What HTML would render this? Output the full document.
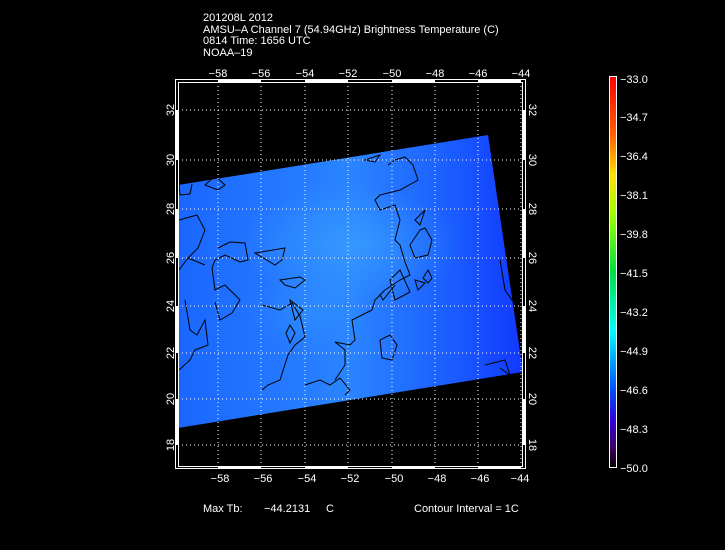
<!DOCTYPE html>
<html><head><meta charset="utf-8"><style>
html,body{margin:0;padding:0;background:#000;}
body{width:725px;height:550px;overflow:hidden;position:relative;font-family:"Liberation Sans",sans-serif;}
svg{position:absolute;left:0;top:0;}
text{font-family:"Liberation Sans",sans-serif;font-size:11px;fill:#fff;}
</style></head><body>
<svg width="725" height="550" viewBox="0 0 725 550">
<defs>
<linearGradient id="sw" x1="0" y1="0" x2="1" y2="0">
<stop offset="0" stop-color="#1a66ff"/><stop offset="0.5" stop-color="#2a85ff"/><stop offset="0.8" stop-color="#1a5cff"/><stop offset="1" stop-color="#1238ff"/>
</linearGradient>
<radialGradient id="hl" cx="0.5" cy="0.5" r="0.5">
<stop offset="0" stop-color="#3aa0ff" stop-opacity="0.7"/><stop offset="1" stop-color="#3aa0ff" stop-opacity="0"/>
</radialGradient>
<linearGradient id="cb" x1="0" y1="0" x2="0" y2="1">
<stop offset="0" stop-color="#ff0000"/><stop offset="0.15" stop-color="#ff6000"/><stop offset="0.25" stop-color="#ffe000"/><stop offset="0.35" stop-color="#a0ff00"/><stop offset="0.5" stop-color="#00e040"/><stop offset="0.65" stop-color="#00ffff"/><stop offset="0.8" stop-color="#0050ff"/><stop offset="0.88" stop-color="#3000e0"/><stop offset="0.95" stop-color="#400060"/><stop offset="1" stop-color="#000000"/>
</linearGradient>
</defs>
<text x="203" y="21">201208L 2012</text>
<text x="203" y="33">AMSU–A Channel 7 (54.94GHz) Brightness Temperature (C)</text>
<text x="203" y="44">0814 Time: 1656 UTC</text>
<text x="203" y="56">NOAA–19</text>

<polygon points="178,185 488,135 523,372 178,428" fill="url(#sw)"/>
<ellipse cx="350" cy="245" rx="110" ry="60" fill="url(#hl)"/>
<ellipse cx="310" cy="310" rx="60" ry="40" fill="url(#hl)" opacity="0.5"/>

<g fill="none" stroke="#000" stroke-width="1">
<path d="M179,184 L180,195 L190,194 L192,184"/>
<path d="M215,176 L225,185 L218,190 L205,185 Z"/>
<path d="M179,220 L197,215 L205,230 L198,248 L188,258 L179,270 M188,258 L205,265"/>
<path d="M255,253 L285,248 L282,260 L275,265 Z"/>
<path d="M218,248 L230,242 L245,243 L248,260 L240,262 L225,255 L215,260 L212,268 L215,290 L225,285 L240,300 L232,313 L220,320 L215,302"/>
<path d="M280,280 L300,277 L305,280 L295,288 L285,285 Z"/>
<path d="M185,300 L190,330 L197,335 L205,320 L208,345 L195,350 L190,360 L179,370"/>
<path d="M262,305 L280,310 L292,303 L300,316 L305,337 L295,345 L288,355 L280,380 L268,385 L262,390"/>
<path d="M290,300 L303,310 L295,320 Z"/>
<path d="M290,325 L295,333 L290,343 L286,333 Z"/>
<path d="M388,165 L395,160 L405,157 L413,165 L418,180 L400,190 L380,195 L375,200 L380,210 L395,205 L400,220 L395,240 L400,245 L405,262 L410,275 L400,280 L385,290 L375,300 L372,310 L352,320 L355,340 L350,345 L335,342 L345,350 L345,365 L335,380"/>
<path d="M390,280 L400,270 L410,292 L395,300 Z"/>
<path d="M395,285 L383,300 L380,295"/>
<path d="M420,230 L425,228 L432,240 L428,255 L415,258 L410,245 Z"/>
<path d="M415,220 L425,210 L420,225 Z"/>
<path d="M415,280 L425,283 L418,290 Z"/>
<path d="M380,340 L390,335 L397,345 L392,360 L382,358 Z"/>
<path d="M365,160 L380,155 L375,162 Z"/>
<path d="M305,385 L320,380 L330,385 L340,378 L350,390 L345,395"/>
<path d="M428,270 L432,278 L428,283 L423,278 Z"/>
<path d="M485,365 L505,360 L510,375 L500,368"/>
<path d="M515,226 L520,240"/>
<path d="M500,260 L505,290 L512,300 L520,310"/>
</g>

<!-- grid -->
<g stroke="#fff" stroke-width="1" stroke-dasharray="1,3">
<line x1="218" y1="82" x2="218" y2="467"/><line x1="261" y1="82" x2="261" y2="467"/><line x1="305" y1="82" x2="305" y2="467"/><line x1="348" y1="82" x2="348" y2="467"/><line x1="392" y1="82" x2="392" y2="467"/><line x1="435" y1="82" x2="435" y2="467"/><line x1="478" y1="82" x2="478" y2="467"/><line x1="521" y1="82" x2="521" y2="467"/>
<line x1="178" y1="110" x2="523" y2="110"/><line x1="178" y1="160" x2="523" y2="160"/><line x1="178" y1="209" x2="523" y2="209"/><line x1="178" y1="258" x2="523" y2="258"/><line x1="178" y1="306" x2="523" y2="306"/><line x1="178" y1="353" x2="523" y2="353"/><line x1="178" y1="399" x2="523" y2="399"/><line x1="178" y1="445" x2="523" y2="445"/>
</g>
<!-- frame -->
<rect x="175.5" y="79.5" width="350" height="389" fill="none" stroke="#fff"/>
<rect x="178.5" y="82.5" width="344" height="384" fill="none" stroke="#fff"/>
<g fill="#fff">
<rect x="218" y="79" width="43" height="3"/><rect x="305" y="79" width="43" height="3"/><rect x="392" y="79" width="43" height="3"/><rect x="478" y="79" width="43" height="3"/>
<rect x="218" y="466" width="43" height="3"/><rect x="305" y="466" width="43" height="3"/><rect x="392" y="466" width="43" height="3"/><rect x="478" y="466" width="43" height="3"/>
<rect x="175" y="110" width="3" height="50"/><rect x="175" y="209" width="3" height="49"/><rect x="175" y="306" width="3" height="47"/><rect x="175" y="399" width="3" height="46"/>
<rect x="523" y="110" width="3" height="50"/><rect x="523" y="209" width="3" height="49"/><rect x="523" y="306" width="3" height="47"/><rect x="523" y="399" width="3" height="46"/>
</g>
<g text-anchor="middle">
<text x="218" y="77">−58</text><text x="261" y="77">−56</text><text x="305" y="77">−54</text><text x="348" y="77">−52</text><text x="392" y="77">−50</text><text x="435" y="77">−48</text><text x="478" y="77">−46</text><text x="521" y="77">−44</text>
<text x="220" y="482">−58</text><text x="263" y="482">−56</text><text x="307" y="482">−54</text><text x="350" y="482">−52</text><text x="394" y="482">−50</text><text x="437" y="482">−48</text><text x="480" y="482">−46</text><text x="520" y="482">−44</text>
</g>
<g text-anchor="middle">
<text transform="translate(174,110) rotate(-90)">32</text><text transform="translate(174,160) rotate(-90)">30</text><text transform="translate(174,209) rotate(-90)">28</text><text transform="translate(174,258) rotate(-90)">26</text><text transform="translate(174,306) rotate(-90)">24</text><text transform="translate(174,353) rotate(-90)">22</text><text transform="translate(174,399) rotate(-90)">20</text><text transform="translate(174,445) rotate(-90)">18</text>
<text transform="translate(529,110) rotate(90)">32</text><text transform="translate(529,160) rotate(90)">30</text><text transform="translate(529,209) rotate(90)">28</text><text transform="translate(529,258) rotate(90)">26</text><text transform="translate(529,306) rotate(90)">24</text><text transform="translate(529,353) rotate(90)">22</text><text transform="translate(529,399) rotate(90)">20</text><text transform="translate(529,445) rotate(90)">18</text>
</g>

<rect x="610" y="77" width="6" height="390" fill="url(#cb)"/>
<rect x="609.5" y="76.5" width="7" height="391" fill="none" stroke="#fff"/>
<g>
<text x="620" y="83">−33.0</text><text x="620" y="121">−34.7</text><text x="620" y="160">−36.4</text><text x="620" y="199">−38.1</text><text x="620" y="238">−39.8</text><text x="620" y="277">−41.5</text><text x="620" y="316">−43.2</text><text x="620" y="355">−44.9</text><text x="620" y="394">−46.6</text><text x="620" y="433">−48.3</text><text x="620" y="472">−50.0</text>
</g>
<text x="203" y="512">Max Tb:</text>
<text x="264" y="512">−44.2131</text>
<text x="326" y="512">C</text>
<text x="414" y="512">Contour Interval = 1C</text>
</svg>
</body></html>
